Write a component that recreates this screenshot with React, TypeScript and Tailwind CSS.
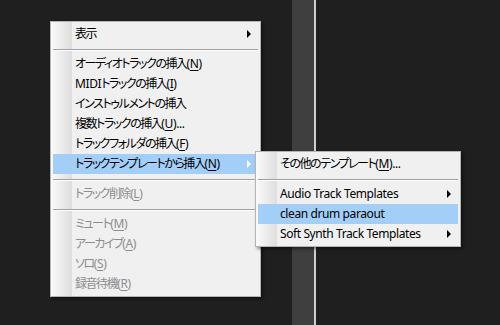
import React from 'react';

type Entry =
  | { kind: 'sep' }
  | { kind: 'item'; label: string; disabled?: boolean; active?: boolean; arrow?: boolean };

const mainMenu: Entry[] = [
  { kind: 'item', label: '表示', arrow: true },
  { kind: 'sep' },
  { kind: 'item', label: 'オーディオトラックの挿入(&N)' },
  { kind: 'item', label: 'MIDIトラックの挿入(&I)' },
  { kind: 'item', label: 'インストゥルメントの挿入' },
  { kind: 'item', label: '複数トラックの挿入(&U)...' },
  { kind: 'item', label: 'トラックフォルダの挿入(&F)' },
  { kind: 'item', label: 'トラックテンプレートから挿入(&N)', active: true, arrow: true },
  { kind: 'sep' },
  { kind: 'item', label: 'トラック削除(&L)', disabled: true },
  { kind: 'sep' },
  { kind: 'item', label: 'ミュート(&M)', disabled: true },
  { kind: 'item', label: 'アーカイブ(&A)', disabled: true },
  { kind: 'item', label: 'ソロ(&S)', disabled: true },
  { kind: 'item', label: '録音待機(&R)', disabled: true },
];

const subMenu: Entry[] = [
  { kind: 'item', label: 'その他のテンプレート(&M)...' },
  { kind: 'sep' },
  { kind: 'item', label: 'Audio Track Templates', arrow: true },
  { kind: 'item', label: 'clean drum paraout', active: true },
  { kind: 'item', label: 'Soft Synth Track Templates', arrow: true },
];

const JP = /([\u3040-\u30ff\u4e00-\u9fff]+)/;

// Japanese runs are set tighter (the original uses Meiryo UI, which is narrow)
const Runs: React.FC<{ text: string }> = ({ text }) => (
  <>
    {text.split(JP).map((part, i) =>
      part === '' ? null : (
        <span key={i} className={JP.test(part) ? 'tracking-[-1.45px]' : 'tracking-[-0.4px]'}>
          {part}
        </span>
      ),
    )}
  </>
);

// "&X" marks the mnemonic letter
const Label: React.FC<{ text: string }> = ({ text }) => {
  const i = text.indexOf('&');
  if (i < 0) return <Runs text={text} />;
  return (
    <>
      <Runs text={text.slice(0, i)} />
      <span className="underline underline-offset-2 tracking-[-0.4px]">{text[i + 1]}</span>
      <Runs text={text.slice(i + 2)} />
    </>
  );
};

const Arrow: React.FC<{ light?: boolean }> = ({ light }) => (
  <svg width="4" height="8" viewBox="0 0 4 8" className="shrink-0">
    <path d="M0 0 L4 4 L0 8 Z" fill={light ? '#ffffff' : '#000000'} />
  </svg>
);

const Menu: React.FC<{ entries: Entry[]; className: string }> = ({ entries, className }) => (
  <div
    className={`absolute border border-[#b4b4b4] p-[2px] shadow-[2px_2px_3px_rgba(0,0,0,0.45)] bg-[linear-gradient(to_right,#fafafa_0px,#dedede_21px,#f0f0f0_21px)] ${className}`}
  >
    {entries.map((e, idx) =>
      e.kind === 'sep' ? (
        <div key={idx} className="h-[10px] pt-[5px]">
          <div className="h-px bg-[#a0a0a0]" />
          <div className="h-px bg-white" />
        </div>
      ) : (
        <div
          key={idx}
          className={`h-[20px] flex items-center pl-[22px] pr-[7px] ${
            e.active ? 'bg-[#a3cef7]' : ''
          } ${e.disabled ? 'text-[#8d8d8d]' : 'text-black'}`}
        >
          <span className="flex-1 whitespace-nowrap leading-none">
            <Label text={e.label} />
          </span>
          {e.arrow && <Arrow light={e.active} />}
        </div>
      ),
    )}
  </div>
);

export default function App() {
  return (
    <div
      className="relative w-[500px] h-[325px] overflow-hidden text-[12px] [font-feature-settings:'palt']"
      style={{ fontFamily: '"Noto Sans", "Noto Sans CJK JP", sans-serif' }}
    >
      <div className="flex h-full">
        <div className="w-[292px] bg-[#1f1f1f]" />
        <div className="w-[22px] bg-[#3f3f3f]" />
        <div className="w-[2px] bg-[#cfcfcf]" />
        <div className="flex-1 bg-[#1f1f1f]" />
      </div>
      <Menu entries={mainMenu} className="left-[50px] top-[21px] w-[211px]" />
      <Menu entries={subMenu} className="left-[255px] top-[151px] w-[206px]" />
    </div>
  );
}
